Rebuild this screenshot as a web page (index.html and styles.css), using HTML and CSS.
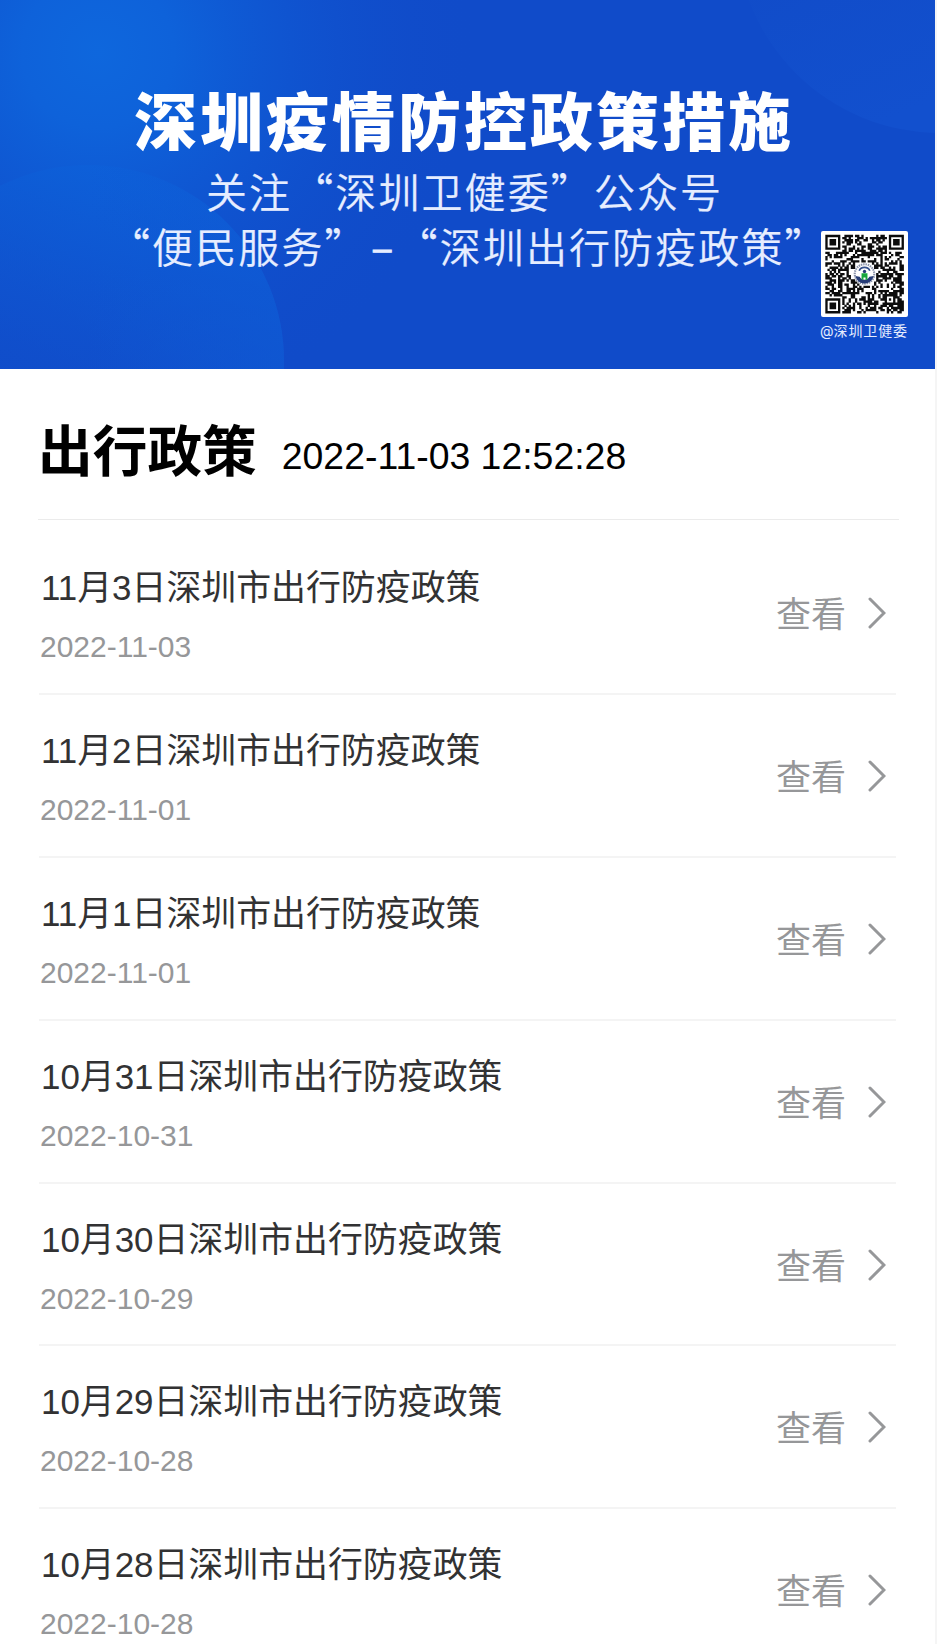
FILE: index.html
```html
<!DOCTYPE html>
<html lang="zh-CN">
<head>
<meta charset="utf-8">
<title>出行政策</title>
<link rel="stylesheet" href="styles.css">
</head>
<body>
<main class="page">
  <header class="banner">
    <svg class="banner-bg" viewBox="0 0 935 369" preserveAspectRatio="none">
      <defs>
        <radialGradient id="glow" gradientUnits="userSpaceOnUse" cx="98" cy="52" r="380">
          <stop offset="0" stop-color="#0e67dd"/><stop offset=".2" stop-color="#0e62da"/><stop offset=".55" stop-color="#0f55d1" stop-opacity=".75"/><stop offset="1" stop-color="#104bc9" stop-opacity="0"/>
        </radialGradient>
        <linearGradient id="disc" x1=".5" y1="0" x2=".3" y2=".5">
          <stop offset="0" stop-color="#0d60d9"/><stop offset="1" stop-color="#1050cc" stop-opacity=".5"/>
        </linearGradient>
        <linearGradient id="disc-edge" x1=".5" y1="0" x2="1" y2="0">
          <stop offset="0" stop-color="#0f58d3" stop-opacity="0"/><stop offset="1" stop-color="#0f58d3" stop-opacity=".7"/>
        </linearGradient>
        <linearGradient id="corner" x1="0" y1=".3" x2=".3" y2="1">
          <stop offset="0" stop-color="#1049c5"/><stop offset="1" stop-color="#1250ce"/>
        </linearGradient>
      </defs>
      <rect width="935" height="369" fill="#104bc9"/>
      <rect width="935" height="369" fill="url(#glow)"/>
      <circle cx="88" cy="361" r="196" fill="url(#disc)" opacity=".8"/>
      <circle cx="88" cy="361" r="196" fill="url(#disc-edge)"/>
      <circle cx="940" cy="-71" r="204" fill="url(#corner)"/>
    </svg>
    <div class="banner-text">
      <h1 class="banner-title">深圳疫情防控政策措施</h1>
      <p class="banner-line">关注“深圳卫健委”公众号</p>
      <p class="banner-line">“便民服务”<span class="dash">–</span>“深圳出行防疫政策”</p>
    </div>
    <div class="qr">
      <svg class="qr-code" id="qr" viewBox="-1.8 -1.8 40.6 40.6"></svg>
      <span class="qr-label"><span class="qr-at">@</span>深圳卫健委</span>
    </div>
  </header>
  <div class="heading"><h2 class="heading-title">出行政策</h2><time class="heading-time">2022-11-03 12:52:28</time></div>
  <ul class="list" id="list"></ul>
</main>
<script src="main.js"></script>
</body>
</html>
```
FILE: styles.css
```css
* { box-sizing: border-box; margin: 0; padding: 0; }
html { overflow: hidden; }
body { width: 937px; height: 1644px; overflow: hidden; background: #f5f5f5; font-family: "Liberation Sans", "Noto Sans CJK SC", sans-serif; }
.page { width: 935px; height: 1644px; overflow: hidden; background: #fff; }
.banner { position: relative; height: 369px; color: #fff; font-family: "Noto Sans CJK SC", sans-serif; }
.banner-bg { position: absolute; inset: 0; width: 100%; height: 100%; }
.banner-text { position: relative; padding-top: 80px; white-space: nowrap; }
.banner-title { padding-left: 134px; font-size: 63px; font-weight: 900; line-height: 76px; letter-spacing: 3px; }
.banner-line { padding-left: 206px; margin-top: 7px; font-size: 41px; font-weight: 350; line-height: 55px; letter-spacing: 2.1px; color: #e6edff; -webkit-text-stroke: .2px #e6edff; }
.banner-line + .banner-line { padding-left: 109px; margin-top: 0; }
.dash { display: inline-block; width: 29px; text-align: center; letter-spacing: 0; -webkit-text-stroke: 1px #e6edff; }
.qr { position: absolute; left: 820px; top: 231px; width: 88px; display: flex; flex-direction: column; align-items: center; }
.qr-code { width: 87px; height: 86px; background: #fff; border-radius: 2px; }
.qr-label { margin-top: 3px; font-size: 14px; line-height: 20px; letter-spacing: .9px; white-space: nowrap; color: #e6edff; }
.qr-at { font-family: Inter, sans-serif; letter-spacing: 0; }
.heading { display: flex; align-items: baseline; height: 151px; margin: 0 36px 0 38px; padding-top: 43px; border-bottom: 1px solid #ebebeb; color: #000; }
.heading-title { font-size: 54.7px; line-height: 80px; font-weight: 700; }
.heading-time { margin-left: 25px; font-size: 37.4px; line-height: 78px; position: relative; top: -2px; }
.list { list-style: none; padding: 12px 39px 0; }
.row { display: flex; justify-content: space-between; height: 162.9px; padding: 32px 0 0 1px; border-bottom: 2px solid #f4f4f4; }
.row-title { padding-left: 1px; font-size: 34.9px; line-height: 48px; color: #323233; font-weight: 400; }
.row-date { display: block; margin-top: 14px; font-size: 30px; line-height: 42px; color: #969799; }
.row-link { display: flex; align-items: center; height: 98px; padding-right: 10px; font-size: 35px; color: #969799; }
.row-text { margin-top: -3px; }
.row-arrow { width: 18px; height: 32px; margin-left: 22px; fill: none; stroke: #969799; stroke-width: 3; stroke-linecap: round; }
```
FILE: main.js
```js
const rows = [
  ["11月3日", "2022-11-03"], ["11月2日", "2022-11-01"], ["11月1日", "2022-11-01"],
  ["10月31日", "2022-10-31"], ["10月30日", "2022-10-29"], ["10月29日", "2022-10-28"], ["10月28日", "2022-10-28"]
];
document.getElementById("list").innerHTML = rows.map(([day, date]) => `
  <li class="row"><div><h3 class="row-title">${day}深圳市出行防疫政策</h3><time class="row-date">${date}</time></div>
  <span class="row-link"><span class="row-text">查看</span><svg class="row-arrow" viewBox="0 0 18 32"><path d="M2 2 16 16 2 30"/></svg></span></li>`).join("");

const N = 37;
let seed = 20221103;
const rand = () => (seed = (seed * 1103515245 + 12345) % 2147483648) / 2147483648;
const ring = (x, y, cx, cy) => Math.max(Math.abs(x - cx), Math.abs(y - cy));
let d = "";
for (let y = 0; y < N; y++) for (let x = 0; x < N; x++) {
  let on = rand() < 0.55;
  for (const [cx, cy] of [[3, 3], [33, 3], [3, 33]]) {
    const r = ring(x, y, cx, cy);
    if (r <= 4) on = r !== 4 && r !== 2;
  }
  const a = ring(x, y, 30, 30);
  if (a <= 2) on = a !== 1;
  if (Math.hypot(x - 18, y - 18) < 5.5) on = false;
  if (on) d += `M${x} ${y}h1.1v1.1h-1.1z`;
}
document.getElementById("qr").innerHTML = `<path d="${d}" fill="#0c0c0c"/>
  <circle cx="18.5" cy="18.5" r="4.6" fill="#fff" stroke="#8a93aa" stroke-width="1" stroke-dasharray=".7 .4"/>
  <path d="M14.2 19.5a4.4 4.4 0 0 0 8.6 0l-2 .3a2.6 2.6 0 0 1-4.6 0z" fill="#263c77"/>
  <path d="M16 17a2.6 2.2 0 0 1 5 0" fill="none" stroke="#34508c" stroke-width=".8"/>
  <circle cx="18.5" cy="17.3" r=".8" fill="#263c77"/>
  <path d="M17.1 21.2v-3h2.8v3h-.9v-1h-1v1z" fill="#18a63c"/>`;
```
